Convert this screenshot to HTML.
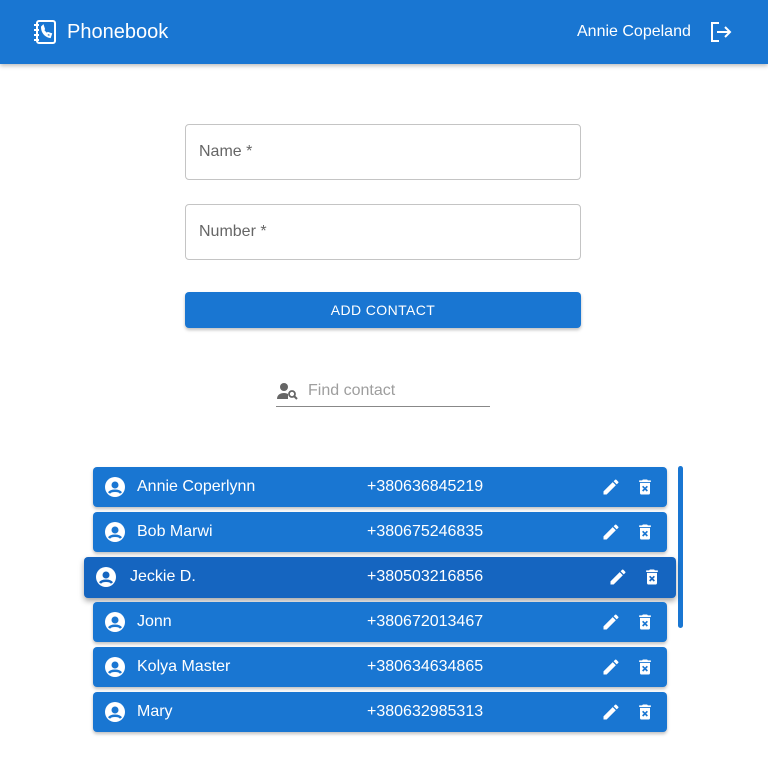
<!DOCTYPE html>
<html><head><style>
*{box-sizing:border-box;margin:0;padding:0}
body{width:768px;height:776px;background:#fff;font-family:"Liberation Sans",sans-serif;position:relative;overflow:hidden}
.bar{position:absolute;left:0;top:0;width:768px;height:64px;background:#1976d2;box-shadow:0 2px 4px rgba(0,0,0,.25);color:#fff}
.field{position:absolute;left:185px;width:396px;height:56px;border:1px solid #c4c4c4;border-radius:4px;color:#666;font-size:16px;padding:18px 13px}
.btn{position:absolute;left:185px;top:292px;width:396px;height:36px;background:#1976d2;border-radius:4px;color:#fff;font-size:14px;text-align:center;line-height:36px;letter-spacing:.4px;box-shadow:0 2px 3px rgba(0,0,0,.25)}
.row{position:absolute;left:93px;width:574px;height:40px;background:#1976d2;border-radius:4px;color:#fff;font-size:16px;box-shadow:0 2px 3px rgba(0,0,0,.25)}
.row .n{position:absolute;left:44px;top:11px}
.row .p{position:absolute;left:274px;top:11px}
.row svg{position:absolute}
</style></head><body>
<div class="bar">
<svg style="position:absolute;left:32px;top:19px" width="26" height="26" viewBox="0 0 26 26" fill="none" stroke="#fff" stroke-width="2"><rect x="5" y="2" width="18" height="22" rx="2"/><path d="M2 6h5M2 11h5M2 16h5M2 21h5"/><path d="M10 8c0 5 3 9 8 10l1-3-3-1-1 1c-2-1-3-3-4-4l1-1-1-3z"/></svg>
<div style="position:absolute;left:67px;top:21px;font-size:20px">Phonebook</div>
<div style="position:absolute;left:577px;top:23px;font-size:16px">Annie Copeland</div>
<svg style="position:absolute;left:710px;top:22px" width="22" height="20" viewBox="0 0 22 20" fill="none" stroke="#fff" stroke-width="2"><path d="M9 1H2v18h7"/><path d="M7 10h13M15 5l5 5-5 5"/></svg>
</div>
<div class="field" style="top:124px">Name *</div>
<div class="field" style="top:204px">Number *</div>
<div class="btn">ADD CONTACT</div>
<svg style="position:absolute;left:277px;top:382px" width="22" height="18" viewBox="0 0 22 18" fill="#666"><circle cx="7" cy="5" r="4"/><path d="M0 17c0-4 3-6 7-6 2 0 3 .5 4 1v5z"/><circle cx="15" cy="12" r="3" fill="none" stroke="#666" stroke-width="1.8"/><path d="M17 14l3 3" stroke="#666" stroke-width="2"/></svg>
<div style="position:absolute;left:308px;top:382px;font-size:16px;color:#9e9e9e">Find contact</div>
<div style="position:absolute;left:276px;top:406px;width:214px;height:1px;background:#888"></div>
<div style="position:absolute;left:678px;top:466px;width:5px;height:162px;background:#1976d2;border-radius:3px"></div>

<div class="row" style="top:467px"><svg style="left:12px;top:10px" width="20" height="20" viewBox="0 0 20 20"><circle cx="10" cy="10" r="10" fill="#fff"/><circle cx="10" cy="8" r="3.5" fill="#1976d2"/><path d="M4 16c2-3 10-3 12 0" stroke="#1976d2" stroke-width="2.5" fill="none"/></svg><span class="n">Annie Coperlynn</span><span class="p">+380636845219</span><svg style="left:508px;top:10px" width="20" height="20" viewBox="0 0 24 24" fill="#fff"><path d="M3 17.25V21h3.75L17.81 9.94l-3.75-3.75L3 17.25zM20.71 7.04a1 1 0 000-1.41l-2.34-2.34a1 1 0 00-1.41 0l-1.83 1.83 3.75 3.75 1.83-1.83z"/></svg><svg style="left:542px;top:10px" width="20" height="20" viewBox="0 0 24 24" fill="#fff"><path d="M6 19a2 2 0 002 2h8a2 2 0 002-2V7H6v12zm2.46-7.12l1.41-1.41L12 12.59l2.12-2.12 1.41 1.41L13.41 14l2.12 2.12-1.41 1.41L12 15.41l-2.12 2.12-1.41-1.41L10.59 14l-2.13-2.12zM15.5 4l-1-1h-5l-1 1H5v2h14V4z"/></svg></div>

<div class="row" style="top:512px"><svg style="left:12px;top:10px" width="20" height="20" viewBox="0 0 20 20"><circle cx="10" cy="10" r="10" fill="#fff"/><circle cx="10" cy="8" r="3.5" fill="#1976d2"/><path d="M4 16c2-3 10-3 12 0" stroke="#1976d2" stroke-width="2.5" fill="none"/></svg><span class="n">Bob Marwi</span><span class="p">+380675246835</span><svg style="left:508px;top:10px" width="20" height="20" viewBox="0 0 24 24" fill="#fff"><path d="M3 17.25V21h3.75L17.81 9.94l-3.75-3.75L3 17.25zM20.71 7.04a1 1 0 000-1.41l-2.34-2.34a1 1 0 00-1.41 0l-1.83 1.83 3.75 3.75 1.83-1.83z"/></svg><svg style="left:542px;top:10px" width="20" height="20" viewBox="0 0 24 24" fill="#fff"><path d="M6 19a2 2 0 002 2h8a2 2 0 002-2V7H6v12zm2.46-7.12l1.41-1.41L12 12.59l2.12-2.12 1.41 1.41L13.41 14l2.12 2.12-1.41 1.41L12 15.41l-2.12 2.12-1.41-1.41L10.59 14l-2.13-2.12zM15.5 4l-1-1h-5l-1 1H5v2h14V4z"/></svg></div>

<div class="row" style="top:557px;left:84px;width:592px;height:41px;background:#1565c0;box-shadow:0 3px 6px rgba(0,0,0,.35)"><svg style="left:12px;top:10px" width="20" height="20" viewBox="0 0 20 20"><circle cx="10" cy="10" r="10" fill="#fff"/><circle cx="10" cy="8" r="3.5" fill="#1565c0"/><path d="M4 16c2-3 10-3 12 0" stroke="#1565c0" stroke-width="2.5" fill="none"/></svg><span class="n" style="left:46px">Jeckie D.</span><span class="p" style="left:283px">+380503216856</span><svg style="left:524px;top:10px" width="20" height="20" viewBox="0 0 24 24" fill="#fff"><path d="M3 17.25V21h3.75L17.81 9.94l-3.75-3.75L3 17.25zM20.71 7.04a1 1 0 000-1.41l-2.34-2.34a1 1 0 00-1.41 0l-1.83 1.83 3.75 3.75 1.83-1.83z"/></svg><svg style="left:558px;top:10px" width="20" height="20" viewBox="0 0 24 24" fill="#fff"><path d="M6 19a2 2 0 002 2h8a2 2 0 002-2V7H6v12zm2.46-7.12l1.41-1.41L12 12.59l2.12-2.12 1.41 1.41L13.41 14l2.12 2.12-1.41 1.41L12 15.41l-2.12 2.12-1.41-1.41L10.59 14l-2.13-2.12zM15.5 4l-1-1h-5l-1 1H5v2h14V4z"/></svg></div>

<div class="row" style="top:602px"><svg style="left:12px;top:10px" width="20" height="20" viewBox="0 0 20 20"><circle cx="10" cy="10" r="10" fill="#fff"/><circle cx="10" cy="8" r="3.5" fill="#1976d2"/><path d="M4 16c2-3 10-3 12 0" stroke="#1976d2" stroke-width="2.5" fill="none"/></svg><span class="n">Jonn</span><span class="p">+380672013467</span><svg style="left:508px;top:10px" width="20" height="20" viewBox="0 0 24 24" fill="#fff"><path d="M3 17.25V21h3.75L17.81 9.94l-3.75-3.75L3 17.25zM20.71 7.04a1 1 0 000-1.41l-2.34-2.34a1 1 0 00-1.41 0l-1.83 1.83 3.75 3.75 1.83-1.83z"/></svg><svg style="left:542px;top:10px" width="20" height="20" viewBox="0 0 24 24" fill="#fff"><path d="M6 19a2 2 0 002 2h8a2 2 0 002-2V7H6v12zm2.46-7.12l1.41-1.41L12 12.59l2.12-2.12 1.41 1.41L13.41 14l2.12 2.12-1.41 1.41L12 15.41l-2.12 2.12-1.41-1.41L10.59 14l-2.13-2.12zM15.5 4l-1-1h-5l-1 1H5v2h14V4z"/></svg></div>

<div class="row" style="top:647px"><svg style="left:12px;top:10px" width="20" height="20" viewBox="0 0 20 20"><circle cx="10" cy="10" r="10" fill="#fff"/><circle cx="10" cy="8" r="3.5" fill="#1976d2"/><path d="M4 16c2-3 10-3 12 0" stroke="#1976d2" stroke-width="2.5" fill="none"/></svg><span class="n">Kolya Master</span><span class="p">+380634634865</span><svg style="left:508px;top:10px" width="20" height="20" viewBox="0 0 24 24" fill="#fff"><path d="M3 17.25V21h3.75L17.81 9.94l-3.75-3.75L3 17.25zM20.71 7.04a1 1 0 000-1.41l-2.34-2.34a1 1 0 00-1.41 0l-1.83 1.83 3.75 3.75 1.83-1.83z"/></svg><svg style="left:542px;top:10px" width="20" height="20" viewBox="0 0 24 24" fill="#fff"><path d="M6 19a2 2 0 002 2h8a2 2 0 002-2V7H6v12zm2.46-7.12l1.41-1.41L12 12.59l2.12-2.12 1.41 1.41L13.41 14l2.12 2.12-1.41 1.41L12 15.41l-2.12 2.12-1.41-1.41L10.59 14l-2.13-2.12zM15.5 4l-1-1h-5l-1 1H5v2h14V4z"/></svg></div>

<div class="row" style="top:692px"><svg style="left:12px;top:10px" width="20" height="20" viewBox="0 0 20 20"><circle cx="10" cy="10" r="10" fill="#fff"/><circle cx="10" cy="8" r="3.5" fill="#1976d2"/><path d="M4 16c2-3 10-3 12 0" stroke="#1976d2" stroke-width="2.5" fill="none"/></svg><span class="n">Mary</span><span class="p">+380632985313</span><svg style="left:508px;top:10px" width="20" height="20" viewBox="0 0 24 24" fill="#fff"><path d="M3 17.25V21h3.75L17.81 9.94l-3.75-3.75L3 17.25zM20.71 7.04a1 1 0 000-1.41l-2.34-2.34a1 1 0 00-1.41 0l-1.83 1.83 3.75 3.75 1.83-1.83z"/></svg><svg style="left:542px;top:10px" width="20" height="20" viewBox="0 0 24 24" fill="#fff"><path d="M6 19a2 2 0 002 2h8a2 2 0 002-2V7H6v12zm2.46-7.12l1.41-1.41L12 12.59l2.12-2.12 1.41 1.41L13.41 14l2.12 2.12-1.41 1.41L12 15.41l-2.12 2.12-1.41-1.41L10.59 14l-2.13-2.12zM15.5 4l-1-1h-5l-1 1H5v2h14V4z"/></svg></div>
</body></html>
